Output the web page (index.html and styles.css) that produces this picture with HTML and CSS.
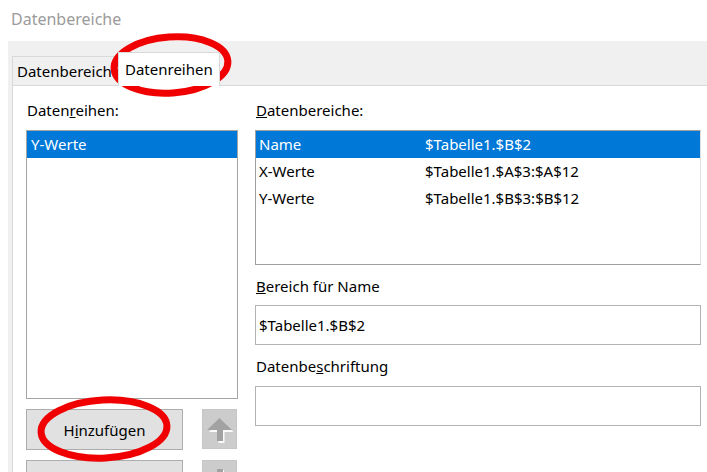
FILE: index.html
```html
<!DOCTYPE html>
<html lang="de">
<head>
<meta charset="utf-8">
<title>Datenbereiche</title>
<link rel="stylesheet" href="styles.css">
</head>
<body>
<div class="title">Datenbereiche</div>
<div class="dialog">
  <div class="tabs">
    <div class="tab">Datenbereiche</div>
    <div class="tab active">Datenreihen</div>
  </div>
  <div class="page">
    <div class="left">
      <div class="label">Daten<u>r</u>eihen:</div>
      <div class="list">
        <div class="item selected">Y-Werte</div>
      </div>
      <div class="btnrow">
        <button class="btn">H<u>i</u>nzufügen</button>
        <button class="arrow" disabled>
          <svg width="33" height="38" viewBox="0 0 33 38">
            <path d="M17.5 9 L30.5 22 L21.5 22 L21.5 33 L15.5 33 L15.5 22 L6 22 Z" fill="#fafafa"/>
            <path d="M16.5 8 L29 20 L20 20 L20 31 L14 31 L14 20 L4 20 Z" fill="#a2a2a2"/>
          </svg>
        </button>
      </div>
      <div class="btnrow">
        <button class="btn"></button>
        <button class="arrow" disabled>
          <svg width="33" height="38" viewBox="0 0 33 38">
            <path d="M15 9 L21 9 L21 20 L30 20 L17.5 32 L5 20 L15 20 Z" fill="#fafafa"/>
            <path d="M14 8 L20 8 L20 19 L29 19 L16.5 31 L4 19 L14 19 Z" fill="#a2a2a2"/>
          </svg>
        </button>
      </div>
    </div>
    <div class="right">
      <div class="label"><u>D</u>atenbereiche:</div>
      <div class="table">
        <div class="trow selected"><span class="c1">Name</span><span>$Tabelle1.$B$2</span></div>
        <div class="trow"><span class="c1">X-Werte</span><span>$Tabelle1.$A$3:$A$12</span></div>
        <div class="trow"><span class="c1">Y-Werte</span><span>$Tabelle1.$B$3:$B$12</span></div>
      </div>
      <div class="label gap"><u>B</u>ereich für Name</div>
      <div class="field">$Tabelle1.$B$2</div>
      <div class="label gap2">Datenbe<u>s</u>chriftung</div>
      <div class="field"></div>
    </div>
  </div>
</div>
<svg class="marks" width="707" height="472" viewBox="0 0 707 472">
  <ellipse cx="171" cy="65" rx="57" ry="28" fill="none" stroke="#f00000" stroke-width="7" transform="rotate(-4 171 65)"/>
  <ellipse cx="104" cy="429" rx="63" ry="29" fill="none" stroke="#f00000" stroke-width="7" transform="rotate(-3 104 429)"/>
</svg>
</body>
</html>
```

FILE: styles.css
```css
* { box-sizing: border-box; }

html, body {
  margin: 0;
  width: 707px;
  height: 472px;
  overflow: hidden;
  background: #ffffff;
  font-family: "Noto Sans", "Open Sans", sans-serif;
  font-size: 15px;
  color: #000;
}

body { position: relative; }

.title {
  height: 41px;
  padding: 8px 0 0 11px;
  color: #9b9b9b;
  font-size: 16px;
  line-height: 22px;
}

.dialog {
  margin-left: 8px;
  background: #f0f0f0;
  padding: 11px 0 0 4px;
  height: 431px;
  overflow: hidden;
}

.tabs {
  display: flex;
  align-items: flex-end;
  height: 33px;
}

.tab {
  height: 29px;
  border: 1px solid #d9d9d9;
  border-bottom: none;
  padding: 2px 0 0 4px;
  line-height: 24px;
  white-space: nowrap;
  overflow: hidden;
}

.tab:first-child {
  width: 108px;
}

.tab.active {
  margin-left: -2px;
  width: 102px;
  background: #fff;
  padding: 4px 0 0 6px;
  position: relative;
  z-index: 1;
  margin-bottom: -1px;
  height: 34px;
}

.page {
  background: #fff;
  border-left: 1px solid #d9d9d9;
  border-top: 1px solid #d9d9d9;
  height: 400px;
  display: flex;
  padding: 13px 0 0 13px;
  gap: 17px;
  overflow: hidden;
}

.left {
  width: 212px;
  display: flex;
  flex-direction: column;
  flex-shrink: 0;
}

.label {
  height: 31px;
  line-height: 22px;
  padding-left: 1px;
  flex-shrink: 0;
}

.list {
  height: 269px;
  flex-shrink: 0;
  border: 1px solid #a5a5a5;
  background: #fff;
}

.item {
  height: 27px;
  line-height: 26px;
  padding-left: 4px;
}

.selected {
  background: #0078d7;
  color: #fff;
}

.btnrow {
  display: flex;
  margin-top: 10px;
  gap: 19px;
  height: 41px;
  flex-shrink: 0;
}

.btn {
  width: 157px;
  height: 41px;
  background: #e1e1e1;
  border: 1px solid #adadad;
  font: inherit;
  color: #000;
  padding: 0;
}

.arrow {
  width: 35px;
  height: 40px;
  background: #cccccc;
  border: 1px solid #c6c6c6;
  padding: 0;
  display: flex;
  align-items: center;
  justify-content: center;
}

.right {
  flex: 1;
  display: flex;
  flex-direction: column;
  padding-right: 6px;
}

.table {
  height: 135px;
  flex-shrink: 0;
  border: 1px solid #a0a0a0;
  border-right-color: #e0e0e0;
}

.trow {
  display: flex;
  height: 27px;
  line-height: 26px;
  padding-left: 3px;
}

.c1 { width: 166px; }

.label.gap {
  margin-top: 10px;
  height: 30px;
}

.label.gap2 {
  margin-top: 10px;
  height: 31px;
}

.field {
  height: 40px;
  flex-shrink: 0;
  border: 1px solid #b4b4b4;
  line-height: 38px;
  padding-left: 3px;
}

.marks {
  position: absolute;
  left: 0;
  top: 0;
  pointer-events: none;
}
```
